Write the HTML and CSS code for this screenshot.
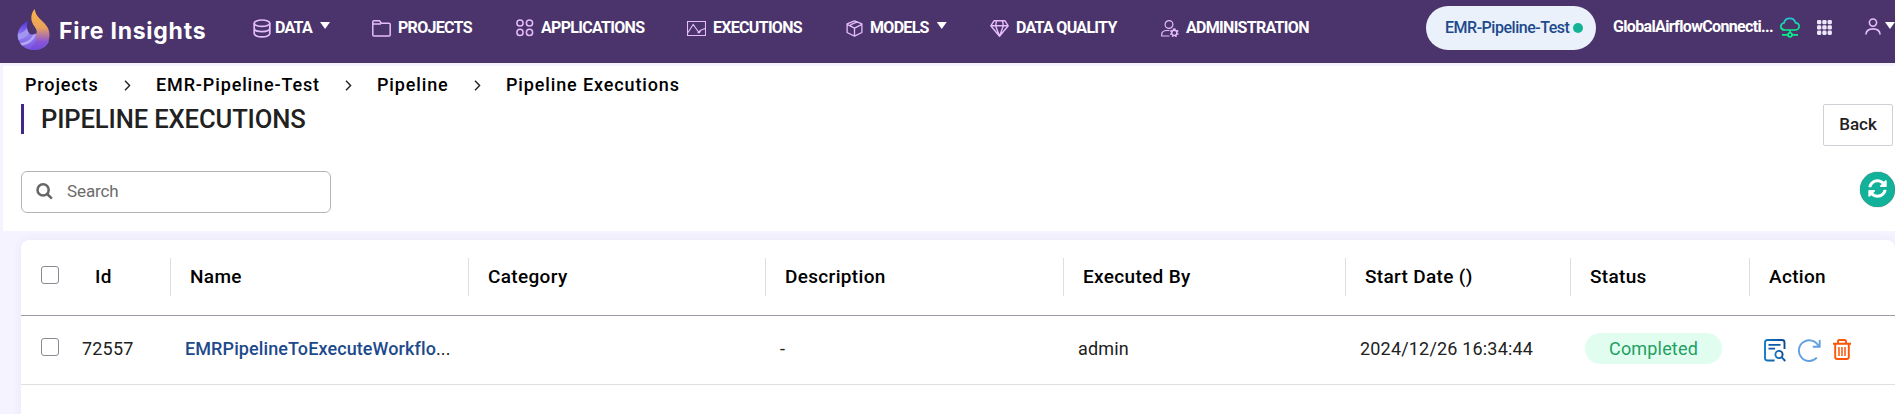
FILE: index.html
```html
<!DOCTYPE html>
<html lang="en">
<head>
<meta charset="utf-8">
<title>Fire Insights - Pipeline Executions</title>
<link rel="stylesheet" href="styles.css">
</head>
<body>
<header class="topbar">
  <div class="brand">
    <svg class="brand-logo" width="34" height="42" viewBox="0 0 34 42">
      <defs>
        <linearGradient id="flame" x1="0" y1="0" x2="0" y2="1"><stop offset="0" stop-color="#ffb347"/><stop offset=".45" stop-color="#e8a25c"/><stop offset=".8" stop-color="#8a55d6"/><stop offset="1" stop-color="#6f4be0"/></linearGradient>
        <linearGradient id="swirl" x1="0" y1="0" x2="0" y2="1"><stop offset="0" stop-color="#5233e0"/><stop offset=".5" stop-color="#8f7df0"/><stop offset="1" stop-color="#7a55dd"/></linearGradient>
      </defs>
      <path fill="url(#swirl)" d="M10.500 12C4 16 .7 21 .7 26.500 1 35 8 41 17 41c8 0 13-4 15-9L19 24c-2 2-5 2-7 0-3-3-2-7-1.500-12z"/>
      <path fill="#a396f3" d="M1 25c4-1 7-3 9.200-6 .1 2 .6 3.500 1.800 5C10 28 5 30 1.500 31 .8 29 .6 27 1 25z"/>
      <path fill="#b3a7f5" d="M5 36.500c7-1 12-5 14-11.500l-3 .8c-1.500 4.500-6 7.700-13 8.200z"/>
      <path fill="url(#flame)" d="M17.500 0c-4.500 6-4 12 0 17.500 2.500 3.500 3 6 1.500 8.500 1 5-2 10-7 14 2 1 4.500 1.300 7 1 8-1 13.500-7 13.500-15 0-8-5-11.500-10-16.500C19.500 6.500 18.500 4 17.500 0z"/>
    </svg>
    <span class="brand-name">Fire Insights</span>
  </div>
  <nav class="nav">
    <a class="nav-item nav-data">
      <svg class="icon" width="18" height="19" viewBox="0 0 18 19"><g fill="none" stroke="#e6bdfa" stroke-width="1.700"><ellipse cx="9" cy="4.200" rx="7.800" ry="3.200"/><path d="M1.200 4.200v10.300c0 1.900 3.400 3.400 7.800 3.400s7.800-1.500 7.800-3.400V4.200M1.200 9.300c0 1.900 3.400 3.300 7.800 3.300s7.800-1.400 7.800-3.300"/></g></svg>
      <span class="nav-text">DATA</span><i class="caret"></i>
    </a>
    <a class="nav-item nav-projects">
      <svg class="icon" width="19" height="17" viewBox="0 0 19 17"><path fill="none" stroke="#e6bdfa" stroke-width="1.500" stroke-linejoin="round" d="M.8 15V2Q.8.8 2 .8h5.500l1.800 2.400H17q1.200 0 1.200 1.200V15q0 1-1.200 1H2q-1.200 0-1.200-1zM1 4h8"/></svg>
      <span class="nav-text">PROJECTS</span>
    </a>
    <a class="nav-item nav-applications">
      <svg class="icon" width="18" height="18" viewBox="0 0 18 18"><g fill="none" stroke="#e6bdfa" stroke-width="1.500"><circle cx="4" cy="4" r="3.100"/><circle cx="13.500" cy="4" r="3.100"/><circle cx="4" cy="13.400" r="3.100"/><circle cx="13.500" cy="13.400" r="3.100"/></g></svg>
      <span class="nav-text">APPLICATIONS</span>
    </a>
    <a class="nav-item nav-executions">
      <svg class="icon" width="19" height="15" viewBox="0 0 19 15"><path fill="none" stroke="#e6bdfa" stroke-width="1.100" d="M.5.5h18v14H.5zM1 11.500 6.200 3.500 11.500 11l2.200-1.800L18 7.500M11.500 11l-.5.800 1.500 0 1-2"/></svg>
      <span class="nav-text">EXECUTIONS</span>
    </a>
    <a class="nav-item nav-models">
      <svg class="icon" width="17" height="17" viewBox="0 0 17 17"><path fill="none" stroke="#e6bdfa" stroke-width="1.300" stroke-linejoin="round" d="M8.500.8 15.900 3.900v8.600l-7.400 3.700-7.400-3.700V3.900zM1.100 4.400l7.400 3.800 7.400-3.800M8.500 8.200v8M4.800 6.300V4.600l7-3"/></svg>
      <span class="nav-text">MODELS</span><i class="caret"></i>
    </a>
    <a class="nav-item nav-quality">
      <svg class="icon" width="19" height="17" viewBox="0 0 19 17"><path fill="none" stroke="#e6bdfa" stroke-width="1.400" stroke-linejoin="round" d="M4 .8h11L18.200 5.800 9.500 16.300.8 5.800zM.8 5.800h17.400M6.500.8 5.600 5.800l3.900 10.500 3.900-10.500L12.500.8"/></svg>
      <span class="nav-text">DATA QUALITY</span>
    </a>
    <a class="nav-item nav-admin">
      <svg class="icon" width="18" height="17" viewBox="0 0 18 17"><g fill="none" stroke="#e6bdfa" stroke-width="1.200"><circle cx="8" cy="4.500" r="3.900"/><path d="M8.500 16H.7v-1.500c0-2.600 2.500-4 5.300-4h2.500"/><circle cx="13.300" cy="12.800" r="2.600" stroke-width="1.500"/><path stroke-width="1.600" stroke-dasharray="1.500 1.450" d="M13.300 9.100a3.700 3.700 0 1 1-.01 0"/></g></svg>
      <span class="nav-text">ADMINISTRATION</span>
    </a>
  </nav>
  <div class="tools">
    <div class="pill"><span class="pill-text">EMR-Pipeline-Test</span><i class="dot"></i></div>
    <span class="connection">GlobalAirflowConnecti...</span>
    <svg class="cloud" width="20" height="21" viewBox="0 0 20 21"><defs><linearGradient id="cl" x1="0" y1="0" x2="0" y2="1"><stop offset="0" stop-color="#22c3d6"/><stop offset=".75" stop-color="#08ec8c"/></linearGradient></defs><g fill="none" stroke="url(#cl)" stroke-width="1.700"><path d="M5 13c-2.400 0-4.100-1.500-4.100-3.600C.9 7.500 2.200 6.200 4 6 4.600 3 6.900 1.300 9.700 1.300c2.900 0 5.200 1.900 5.800 4.500 2.100.1 3.600 1.600 3.600 3.600S17.400 13 15.200 13z"/><path stroke="#08ec8c" d="M10 13v3M2 17.800h5.800m4.400 0H18"/><circle cx="10" cy="17.800" r="2" stroke="#08ec8c"/></g></svg>
    <svg class="apps" width="15" height="15" viewBox="0 0 15 15"><g fill="#efe6fa"><rect width="4.300" height="4.300" rx="1.300"/><rect x="5.300" width="4.300" height="4.300" rx="1.300"/><rect x="10.600" width="4.300" height="4.300" rx="1.300"/><rect y="5.300" width="4.300" height="4.300" rx="1.300"/><rect x="5.300" y="5.300" width="4.300" height="4.300" rx="1.300"/><rect x="10.600" y="5.300" width="4.300" height="4.300" rx="1.300"/><rect y="10.600" width="4.300" height="4.300" rx="1.300"/><rect x="5.300" y="10.600" width="4.300" height="4.300" rx="1.300"/><rect x="10.600" y="10.600" width="4.300" height="4.300" rx="1.300"/></g></svg>
    <svg class="user" width="16" height="17" viewBox="0 0 16 17"><g fill="none" stroke="#e6bdfa" stroke-width="1.600"><circle cx="8" cy="4.600" r="3.600"/><path d="M.9 16.500c.3-3.600 3.200-5.600 7.100-5.600s6.800 2 7.100 5.600"/></g></svg>
    <i class="caret caret-user"></i>
  </div>
</header>

<main class="page">
  <section class="panel">
    <div class="crumbs">
      <a class="crumb crumb-1">Projects</a>
      <svg class="sep" width="7" height="11" viewBox="0 0 7 11"><path d="M1 .8 5.600 5.500 1 10.200"/></svg>
      <a class="crumb crumb-2">EMR-Pipeline-Test</a>
      <svg class="sep" width="7" height="11" viewBox="0 0 7 11"><path d="M1 .8 5.600 5.500 1 10.200"/></svg>
      <a class="crumb crumb-3">Pipeline</a>
      <svg class="sep" width="7" height="11" viewBox="0 0 7 11"><path d="M1 .8 5.600 5.500 1 10.200"/></svg>
      <a class="crumb crumb-4">Pipeline Executions</a>
    </div>
    <div class="title-row">
      <h1 class="title">PIPELINE EXECUTIONS</h1>
      <button class="back">Back</button>
    </div>
    <div class="search-row">
      <div class="search">
        <svg width="17" height="17" viewBox="0 0 17 17"><g fill="none" stroke="#666" stroke-width="2.500"><circle cx="7.100" cy="6.900" r="5.600"/><path d="m11.200 11 4.700 4.700"/></g></svg>
        <span class="search-text">Search</span>
      </div>
      <button class="refresh">
        <svg width="19" height="19" viewBox="0 0 512 512"><path fill="#fff" d="M370.700 133.300C339.500 104 298.900 88 255.800 88c-77.500.1-144.300 53.200-162.800 126.900-1.300 5.400-6.100 9.100-11.700 9.100H24.100c-7.500 0-13.200-6.800-11.800-14.200C33.900 94.900 134.800 8 256 8c66.400 0 126.800 26.100 171.300 68.700L463 41c15.100-15.100 41-4.400 41 17v134c0 13.300-10.700 24-24 24H346c-21.400 0-32.100-25.900-17-41zM32 296h134c21.400 0 32.100 25.900 17 41l-41.800 41.800c31.300 29.300 71.800 45.300 114.900 45.300 77.400-.1 144.300-53.100 162.800-126.800 1.300-5.400 6.100-9.100 11.700-9.100h57.300c7.500 0 13.200 6.800 11.800 14.200C478.100 417.100 377.200 504 256 504c-66.400 0-126.800-26.100-171.300-68.700L49 471c-15.100 15.100-41 4.400-41-17V320c0-13.300 10.700-24 24-24z"/></svg>
      </button>
    </div>
  </section>

  <section class="card">
    <div class="row head">
      <div class="cell check"><i class="box"></i></div>
      <div class="cell id">Id</div>
      <div class="cell">Name</div>
      <div class="cell">Category</div>
      <div class="cell">Description</div>
      <div class="cell">Executed By</div>
      <div class="cell">Start Date ()</div>
      <div class="cell">Status</div>
      <div class="cell">Action</div>
    </div>
    <div class="row body">
      <div class="cell check"><i class="box"></i></div>
      <div class="cell id">72557</div>
      <div class="cell name"><a class="link">EMRPipelineToExecuteWorkflo</a>...</div>
      <div class="cell"></div>
      <div class="cell">-</div>
      <div class="cell">admin</div>
      <div class="cell">2024/12/26 16:34:44</div>
      <div class="cell"><span class="status">Completed</span></div>
      <div class="cell actions">
        <svg width="22" height="23" viewBox="0 0 22 23"><defs><linearGradient id="lg" x1="0" y1="0" x2="1" y2="0"><stop offset="0" stop-color="#1279c4"/><stop offset="1" stop-color="#0d4a8f"/></linearGradient></defs><g fill="none" stroke="url(#lg)" stroke-width="1.900"><path d="M10.500 21.500H3.500q-2.500 0-2.500-2.500V3.500Q1 1 3.500 1H18q2.500 0 2.500 2.500V10"/><circle cx="15" cy="15.500" r="3.600"/><path d="m17.600 18.200 3.600 3.800"/></g><path stroke="#0d5aa5" stroke-width="1.800" d="M4.500 5.900h12M4.500 9.600h6.500"/></svg>
        <svg width="23" height="23" viewBox="0 0 23 23"><path fill="none" stroke="#62a0e0" stroke-width="1.900" d="M18.800 18.600A10.300 10.300 0 1 1 20.400 7M21.700 1v6.800h-6.900"/></svg>
        <svg width="18" height="21" viewBox="0 0 18 21"><g fill="none" stroke="#fb5607" stroke-width="1.900"><path d="M0 4.700h18M5 4.500V2.200Q5 1 6.200 1h5.600Q13 1 13 2.200v2.300M2.200 5v13q0 2 2 2h9.600q2 0 2-2V5"/><path stroke-width="1.500" d="M6 8v9M9 8v9m3-9v9"/></g></svg>
      </div>
    </div>
  </section>
</main>
</body>
</html>
```

FILE: styles.css
```css
* { box-sizing: border-box; }
body {
  margin: 0;
  height: 414px;
  overflow: hidden;
  background: #f5f3ff;
  font-family: Roboto, "Liberation Sans", sans-serif;
  color: #212121;
}
svg { display: block; flex: none; }
i { display: block; flex: none; }

/* Top bar */
.topbar {
  display: flex;
  height: 63px;
  background: #4b346b;
  color: #fff;
}
.brand { display: flex; width: 253px; padding: 9px 0 0 17px; }
.brand-name {
  margin: 7px 0 0 8px;
  font: 700 23px/30px Inter, sans-serif;
  letter-spacing: .75px;
  white-space: nowrap;
}
.nav { display: flex; height: 56px; align-items: center; width: 1173px; }
.nav-item { display: flex; align-items: center; flex: none; }
.nav-text {
  margin-left: 7px;
  font-size: 16px;
  line-height: 20px;
  font-weight: 700;
  letter-spacing: -0.7px;
  white-space: nowrap;
}
.nav-data { width: 119px; }
.nav-data .nav-text { margin-left: 4px; }
.nav-projects { width: 144px; }
.nav-applications { width: 171px; }
.nav-executions { width: 159px; }
.nav-models { width: 144px; }
.nav-quality { width: 171px; }
.caret {
  width: 10px;
  height: 7px;
  margin: -5px 0 0 8px;
  background: #fff;
  clip-path: polygon(0 0, 100% 0, 50% 100%);
}
.tools { display: flex; align-items: flex-start; width: 469px; }
.pill {
  display: flex;
  align-items: center;
  width: 170px;
  height: 44px;
  margin-top: 6px;
  padding-left: 19px;
  border-radius: 22px;
  background: #eaf1fa;
  color: #1d4a8c;
}
.pill-text {
  width: 128px;
  margin-top: -1px;
  font-size: 16px;
  font-weight: 500;
  letter-spacing: -.48px;
  white-space: nowrap;
}
.dot { width: 10px; height: 10px; border-radius: 50%; background: #13b398; }
.connection {
  width: 167px;
  margin: 17px 0 0 17px;
  font-size: 16px;
  line-height: 20px;
  font-weight: 700;
  letter-spacing: -0.65px;
  white-space: nowrap;
}
.cloud { margin-top: 17px; }
.apps { margin: 20px 0 0 17px; }
.user { margin: 18px 0 0 33px; }
.caret-user { margin: 22px 0 0 4px; }

/* Page heading */
.page { padding: 3px 0 0 3px; }
.panel { height: 165px; background: #fff; }
.crumbs {
  display: flex;
  align-items: center;
  height: 38px;
  padding-left: 22px;
  color: #000;
}
.crumb {
  font-size: 18px;
  line-height: 24px;
  font-weight: 500;
  letter-spacing: .87px;
  white-space: nowrap;
}
.crumb-1 { width: 99px; }
.crumb-2 { width: 189px; }
.crumb-3 { width: 97px; }
.sep { margin-right: 25px; fill: none; stroke: #222; stroke-width: 1.4; }
.title-row { display: flex; justify-content: space-between; padding: 0 2px 0 18px; }
.title {
  height: 30px;
  margin: 0;
  padding-left: 17px;
  border-left: 3px solid #40278a;
  font-size: 25.6px;
  line-height: 30px;
  font-weight: 500;
  letter-spacing: -.13px;
  color: #212121;
}
.back {
  width: 70px;
  height: 42px;
  padding: 0 0 2px;
  border: 1px solid #cfcfd6;
  border-radius: 2px;
  background: #fff;
  color: #212121;
  font: 500 17px Roboto, sans-serif;
}
.search-row { display: flex; justify-content: space-between; padding: 25px 0 0 18px; }
.search {
  display: flex;
  align-items: center;
  gap: 14px;
  width: 310px;
  height: 42px;
  padding: 0 14px 2px;
  border: 1px solid #b5b5b5;
  border-radius: 6px;
}
.search-text { font-size: 17px; letter-spacing: -.1px; color: #6b6b6b; }
.refresh {
  display: flex;
  justify-content: center;
  width: 35px;
  height: 35px;
  margin-top: 1px;
  padding: 7px 0 0;
  border: 0;
  border-radius: 50%;
  background: #12b199;
  box-shadow: 0 0 1px #555;
}

/* Executions table */
.card {
  height: 190px;
  margin: 9px 0 0 18px;
  border-radius: 8px 8px 0 0;
  background: #fff;
  box-shadow: 0 0 10px rgba(90, 70, 180, .07);
}
.row {
  display: grid;
  grid-template-columns: 49px 101px 298px 297px 298px 282px 225px 179px 1fr;
  align-items: center;
}
.cell { white-space: nowrap; font-size: 18px; line-height: 24px; }
.head { height: 76px; padding-bottom: 2px; border-bottom: 1px solid #9a9ca6; }
.head .cell {
  height: 38px;
  padding-left: 19px;
  line-height: 38px;
  border-right: 1px solid #dedede;
  font-size: 19px;
  font-weight: 500;
  letter-spacing: .33px;
  color: #000;
}
.head .cell:last-child { border-right: 0; }
.head .check { border-right: 0; }
.head .id { padding-left: 25px; }
.body { height: 69px; border-bottom: 1px solid #e0e0e0; }
.body .cell { padding: 0 0 3px 14px; letter-spacing: .18px; }
.body .id { padding-left: 12px; }
.head .check, .body .check { padding-left: 20px; }
.box {
  width: 18px;
  height: 18px;
  border: 1px solid #8b8b95;
  border-radius: 3px;
  background: #fff;
}
.head .box { margin-top: 8px; }
.body .box { margin-bottom: 3px; }
.body .name { letter-spacing: .1px; }
.link { color: #1d4a8c; font-weight: 500; }
.status {
  display: block;
  width: 137px;
  height: 31px;
  border-radius: 16px;
  background: #e0fdf0;
  color: #23a062;
  line-height: 31px;
  text-align: center;
}
.body .actions { display: flex; padding: 0 0 0 14px; gap: 12px; }
```
